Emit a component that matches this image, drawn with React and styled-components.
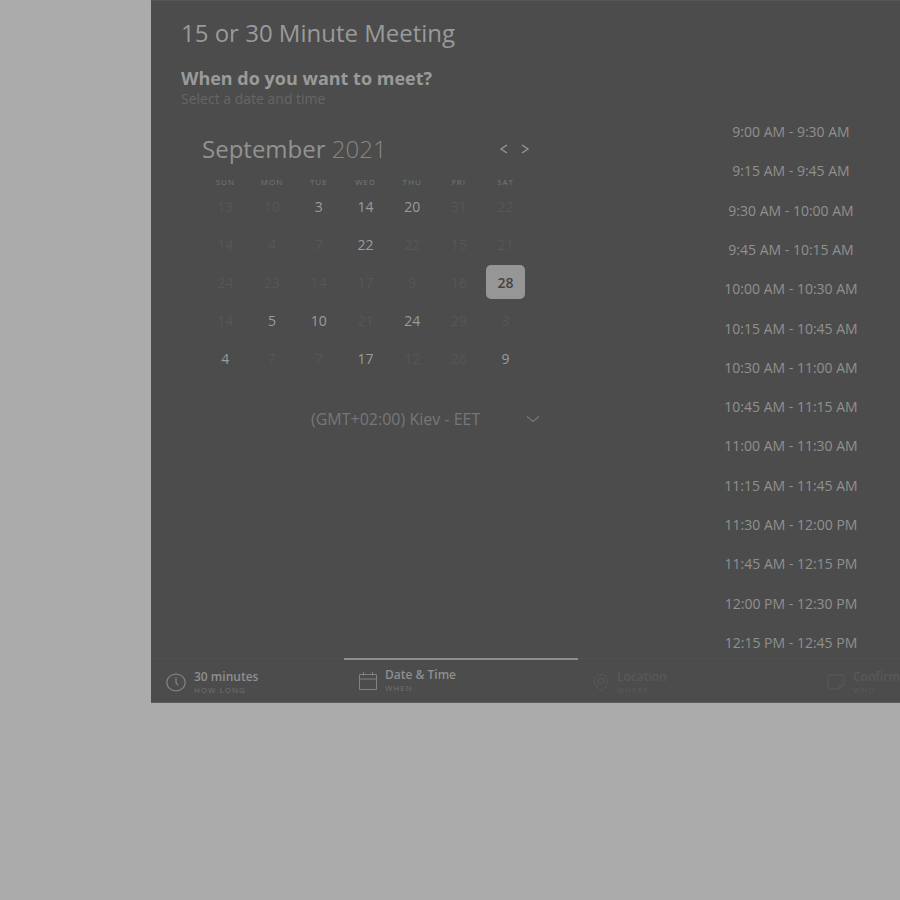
import React, { useState } from "react";
import styled, { createGlobalStyle } from "styled-components";

const GlobalStyle = createGlobalStyle`
  * { box-sizing: border-box; }
  body {
    margin: 0;
    background: #ababab;
    font-family: "Open Sans", "Noto Sans", sans-serif;
    color: #9a9a9a;
  }
  button, select { font-family: inherit; color: inherit; background: none; border: 0; padding: 0; }
  h1, h2, h3, p, ul { margin: 0; padding: 0; }
`;

const Page = styled.div`
  min-height: 100vh;
  overflow: hidden;
  padding-left: 151px;
`;

const Panel = styled.main`
  min-width: 854px;
  background: #4c4c4c;
  border-top: 1px solid #565656;
  border-bottom: 1px solid #5c5c5c;
`;

const Header = styled.header`
  padding: 17px 30px 0;
  height: 111px;
`;

const Title = styled.h1`
  font-size: 24px;
  line-height: 30px;
  font-weight: 500;
`;

const Question = styled.h2`
  margin-top: 18px;
  font-size: 18px;
  line-height: 24px;
  font-weight: 700;
`;

const Hint = styled.p`
  font-size: 14px;
  line-height: 18px;
  color: #666;
`;

const Columns = styled.div`
  display: grid;
  grid-template-columns: 420fr 434fr;
  height: 546px;
  overflow: hidden;
`;

const CalendarPane = styled.section`
  padding: 20px 30px 0 51px;
`;

const MonthBar = styled.div`
  display: flex;
  justify-content: space-between;
  align-items: center;
  width: 330px;
  height: 34px;
`;

const Month = styled.h3`
  font-size: 24px;
  line-height: 34px;
  font-weight: 400;
  color: #929292;
`;

const Year = styled.span`
  font-weight: 300;
  color: #868686;
`;

const Arrows = styled.div`
  display: flex;
  gap: 7px;
`;

const ArrowButton = styled.button`
  display: grid;
  place-items: center;
  width: 14px;
  height: 20px;
  color: #959595;
`;

const Calendar = styled.table`
  width: 327px;
  height: 201px;
  margin-top: 10px;
  border-collapse: collapse;
  table-layout: fixed;
`;

const Weekday = styled.th`
  height: 12px;
  padding: 0;
  font-size: 8px;
  line-height: 12px;
  font-weight: 400;
  letter-spacing: 1px;
  color: #777;
`;

const DayCell = styled.td`
  padding: 0;
`;

const Day = styled.button`
  display: block;
  margin: 0 auto;
  width: 39px;
  height: 34px;
  border-radius: 5px;
  font-size: 14px;
  font-weight: 500;
  color: #9b9b9b;
  background: ${(p) => (p.$selected ? "#969696" : "transparent")};
  ${(p) => p.$selected && "color: #444; font-weight: 600;"}
  &:disabled { color: #565656; font-weight: 400; }
`;

const Zone = styled.label`
  display: flex;
  align-items: center;
  width: 229px;
  height: 24px;
  margin: 30px 0 0 109px;
  color: #777;
`;

const ZoneSelect = styled.select`
  flex: 1;
  min-width: 0;
  appearance: none;
  font-size: 16px;
  line-height: 24px;
  outline: none;
`;

const SlotList = styled.ul`
  display: grid;
  grid-auto-rows: 1fr;
  height: 550px;
  margin-top: 4px;
  list-style: none;
`;

const SlotItem = styled.li`
  display: grid;
  border-top: 1px solid #4e4e4e;
`;

const SlotButton = styled.button`
  padding: 0 0 9px 6px;
  font-size: 14px;
  font-weight: 500;
  color: #909090;
`;

const Steps = styled.nav`
  display: grid;
  grid-template-columns: 193fr 234fr 234fr 193fr;
  height: 44px;
`;

const Step = styled.button`
  display: flex;
  align-items: flex-start;
  gap: 8px;
  padding: ${(p) => (p.$active ? "7px" : "10px")} 15px 0;
  border-top: ${(p) => (p.$active ? "2px solid #8e8e8e" : "1px solid #4f4f4f")};
  text-align: left;
  color: #8f8f8f;
  &:disabled { color: #595959; }
`;

const StepIcon = styled.svg`
  flex: none;
  height: 20px;
  margin-top: 4px;
  fill: none;
  stroke: currentColor;
  stroke-width: 1;
  opacity: ${(p) => (p.$dim ? 1 : 0.8)};
`;

const StepName = styled.span`
  display: block;
  font-size: 12px;
  line-height: 16px;
  font-weight: 600;
`;

const StepKind = styled.span`
  display: block;
  font-size: 8px;
  line-height: 10px;
  letter-spacing: 1px;
  color: ${(p) => (p.$dim ? "#595959" : "#707070")};
`;

const weekdays = ["SUN", "MON", "TUE", "WED", "THU", "FRI", "SAT"];
const weeks = [
  [13, 10, 3, 14, 20, 31, 22],
  [14, 4, 7, 22, 22, 15, 21],
  [24, 23, 14, 17, 9, 16, 28],
  [14, 5, 10, 21, 24, 29, 3],
  [4, 7, 7, 17, 12, 26, 9],
];
const openDays = new Set(["0-2", "0-3", "0-4", "1-3", "2-6", "3-1", "3-2", "3-4", "4-0", "4-3", "4-6"]);
const slots = [
  "9:00 AM - 9:30 AM",
  "9:15 AM - 9:45 AM",
  "9:30 AM - 10:00 AM",
  "9:45 AM - 10:15 AM",
  "10:00 AM - 10:30 AM",
  "10:15 AM - 10:45 AM",
  "10:30 AM - 11:00 AM",
  "10:45 AM - 11:15 AM",
  "11:00 AM - 11:30 AM",
  "11:15 AM - 11:45 AM",
  "11:30 AM - 12:00 PM",
  "11:45 AM - 12:15 PM",
  "12:00 PM - 12:30 PM",
  "12:15 PM - 12:45 PM",
];
const steps = [
  {
    name: "30 minutes",
    kind: "HOW LONG",
    iconWidth: 20,
    icon: (
      <>
        <ellipse cx="10" cy="9.500" rx="9.3" ry="8.3" strokeWidth="1.3" />
        <path d="M10 4.500v5.200l2.200 2.600" strokeWidth="1.3" />
      </>
    ),
  },
  {
    name: "Date & Time",
    kind: "WHEN",
    active: true,
    iconWidth: 18,
    icon: <path d="M.5 3.500h17v15H.5zM.5 8h17M4.500 1v3.500M13.500 1v3.500" />,
  },
  {
    name: "Location",
    kind: "WHERE",
    disabled: true,
    iconWidth: 16,
    icon: (
      <>
        <path d="M8 18C4 14 1 11.500 1 8a7 6.300 0 0 1 14 0C15 11.500 12 14 8 18z" />
        <ellipse cx="8" cy="8" rx="3.200" ry="2.800" />
      </>
    ),
  },
  {
    name: "Confirm",
    kind: "WHO",
    disabled: true,
    iconWidth: 18,
    icon: <path d="M17 12V3.500a1.500 1.500 0 0 0-1.500-1.500H2.500A1.500 1.500 0 0 0 1 3.500v11A1.500 1.500 0 0 0 2.500 16H12zM12 16v-2.500a1.500 1.500 0 0 1 1.500-1.500H17" />,
  },
];

function Arrow({ d }) {
  return (
    <svg width="10" height="10" viewBox="0 0 10 10" fill="none" stroke="currentColor" strokeWidth="1.4" aria-hidden="true">
      <path d={d} />
    </svg>
  );
}

export default function App() {
  const [selected, setSelected] = useState("2-6");
  return (
    <>
      <GlobalStyle />
      <Page>
        <Panel>
          <Header>
            <Title>15 or 30 Minute Meeting</Title>
            <Question>When do you want to meet?</Question>
            <Hint>Select a date and time</Hint>
          </Header>
          <Columns>
            <CalendarPane>
              <MonthBar>
                <Month>
                  September <Year>2021</Year>
                </Month>
                <Arrows>
                  <ArrowButton aria-label="Previous month">
                    <Arrow d="M8 1 2 5l6 4" />
                  </ArrowButton>
                  <ArrowButton aria-label="Next month">
                    <Arrow d="m2 1 6 4-6 4" />
                  </ArrowButton>
                </Arrows>
              </MonthBar>
              <Calendar>
                <thead>
                  <tr>
                    {weekdays.map((d) => (
                      <Weekday key={d} scope="col">{d}</Weekday>
                    ))}
                  </tr>
                </thead>
                <tbody>
                  {weeks.map((week, r) => (
                    <tr key={r}>
                      {week.map((day, c) => {
                        const id = `${r}-${c}`;
                        return (
                          <DayCell key={id}>
                            <Day
                              disabled={!openDays.has(id)}
                              $selected={selected === id}
                              aria-pressed={selected === id}
                              onClick={() => setSelected(id)}
                            >
                              {day}
                            </Day>
                          </DayCell>
                        );
                      })}
                    </tr>
                  ))}
                </tbody>
              </Calendar>
              <Zone>
                <ZoneSelect aria-label="Time zone">
                  <option>(GMT+02:00) Kiev - EET</option>
                </ZoneSelect>
                <svg width="14" height="8" viewBox="0 0 14 8" fill="none" stroke="currentColor" strokeWidth="1.2" aria-hidden="true">
                  <path d="m1 1.500 6 5 6-5" />
                </svg>
              </Zone>
            </CalendarPane>
            <SlotList>
              {slots.map((slot) => (
                <SlotItem key={slot}>
                  <SlotButton>{slot}</SlotButton>
                </SlotItem>
              ))}
            </SlotList>
          </Columns>
          <Steps aria-label="Booking steps">
            {steps.map((s) => (
              <Step key={s.name} $active={s.active} disabled={s.disabled} aria-current={s.active ? "step" : undefined}>
                <StepIcon $dim={s.disabled} width={s.iconWidth} viewBox={`0 0 ${s.iconWidth} 20`} aria-hidden="true">{s.icon}</StepIcon>
                <span>
                  <StepName>{s.name}</StepName>
                  <StepKind $dim={s.disabled}>{s.kind}</StepKind>
                </span>
              </Step>
            ))}
          </Steps>
        </Panel>
      </Page>
    </>
  );
}
